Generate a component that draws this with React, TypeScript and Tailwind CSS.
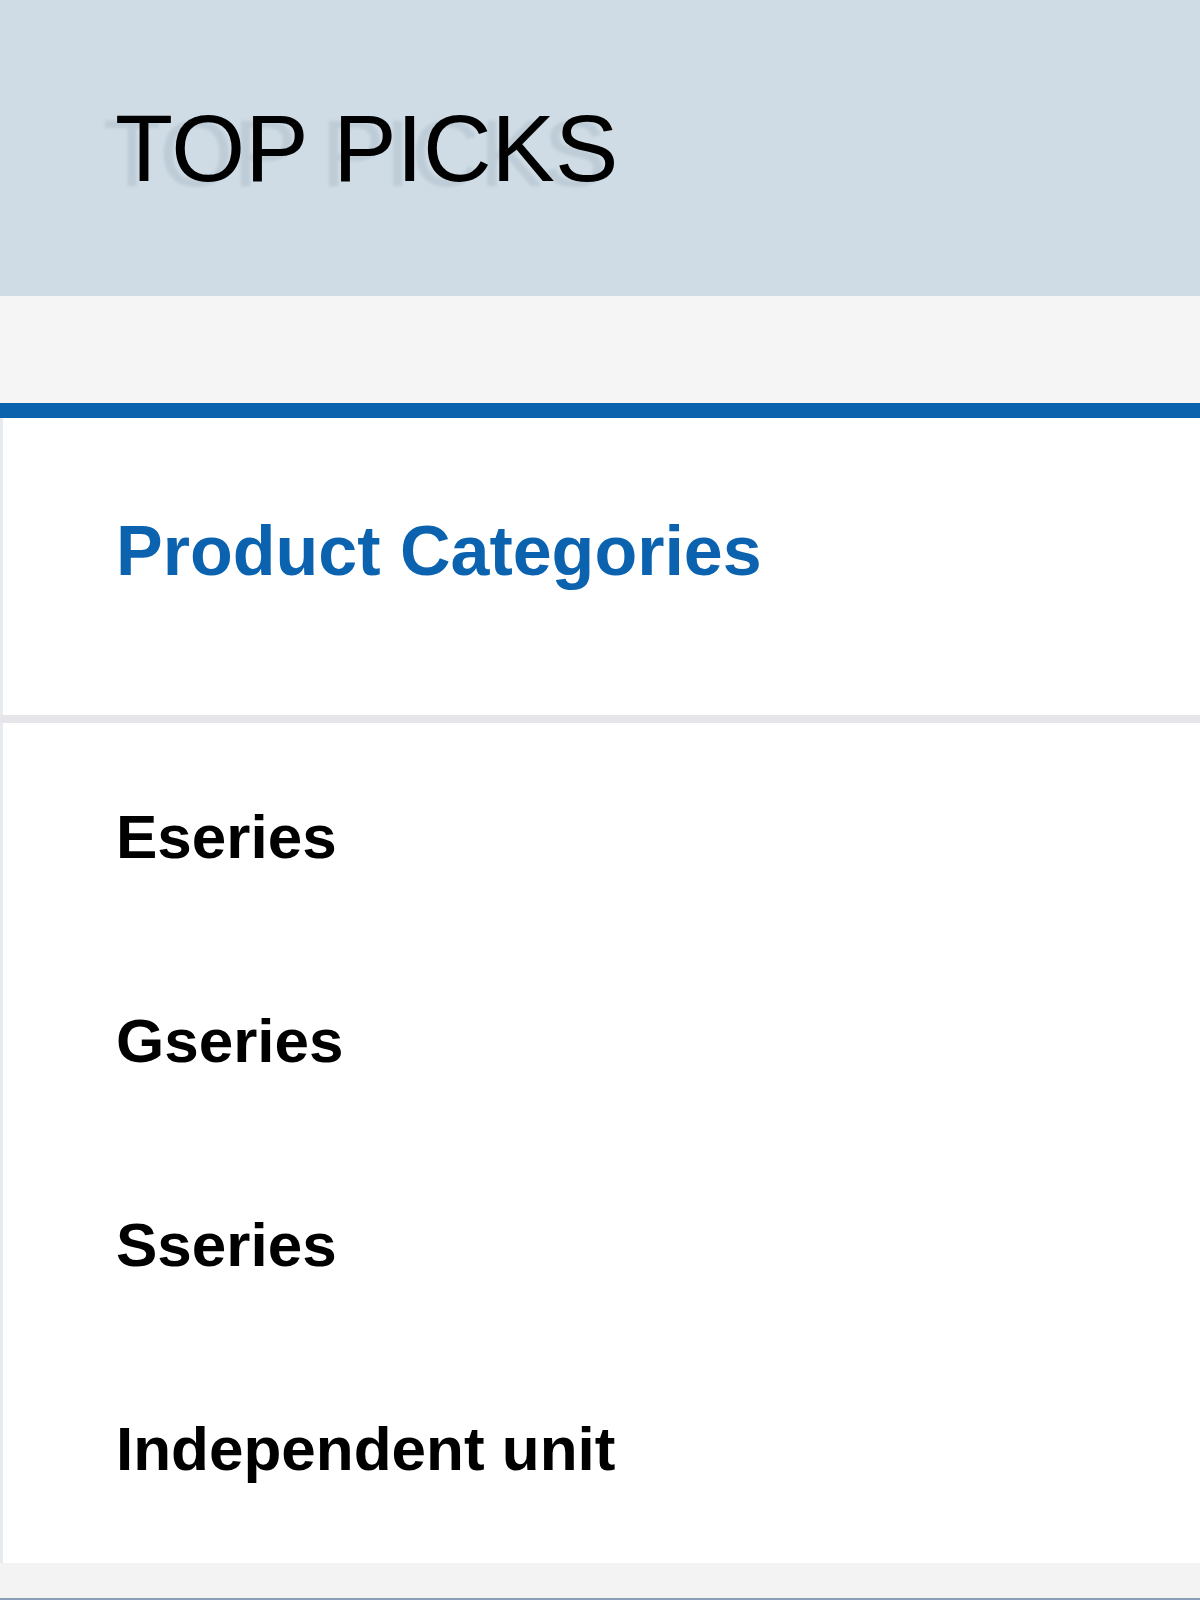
const categories = ["Eseries", "Gseries", "Sseries", "Independent unit"];

export default function App() {
  return (
    <div className="w-[1200px] h-[1600px] flex flex-col bg-[#f3f3f3] font-['Liberation_Sans',Arial,sans-serif] overflow-hidden">
      {/* banner */}
      <div className="h-[296px] shrink-0 flex items-center pl-[115px] bg-[#cfdce5]">
        <h1 className="text-[95px] leading-none font-normal text-black [text-shadow:-12px_5px_3px_rgba(80,100,120,0.13)]">
          TOP PICKS
        </h1>
      </div>

      <div className="h-[107px] shrink-0 bg-[#f5f5f5]" />

      <div className="h-[15px] shrink-0 bg-[#0b63ae]" />

      {/* categories header */}
      <div className="h-[297px] shrink-0 bg-white border-l-[3px] border-[#e6ebef] pl-[113px] pt-[98px]">
        <h2 className="text-[70px] leading-none font-bold text-[#0b63b0]">Product Categories</h2>
      </div>

      <div className="h-[8px] shrink-0 bg-[#e5e5ea]" />

      {/* list */}
      <ul className="shrink-0 bg-white border-l-[3px] border-[#e6ebef] py-[12px] shadow-[0_2px_0_#e2e2e6]">
        {categories.map((name) => (
          <li key={name} className="h-[204px] flex items-center pl-[113px]">
            <span className="text-[62px] leading-none font-bold text-black">{name}</span>
          </li>
        ))}
      </ul>

      <div className="flex-1 bg-[#f3f3f3] border-b-2 border-[#8c9db6]" />
    </div>
  );
}
